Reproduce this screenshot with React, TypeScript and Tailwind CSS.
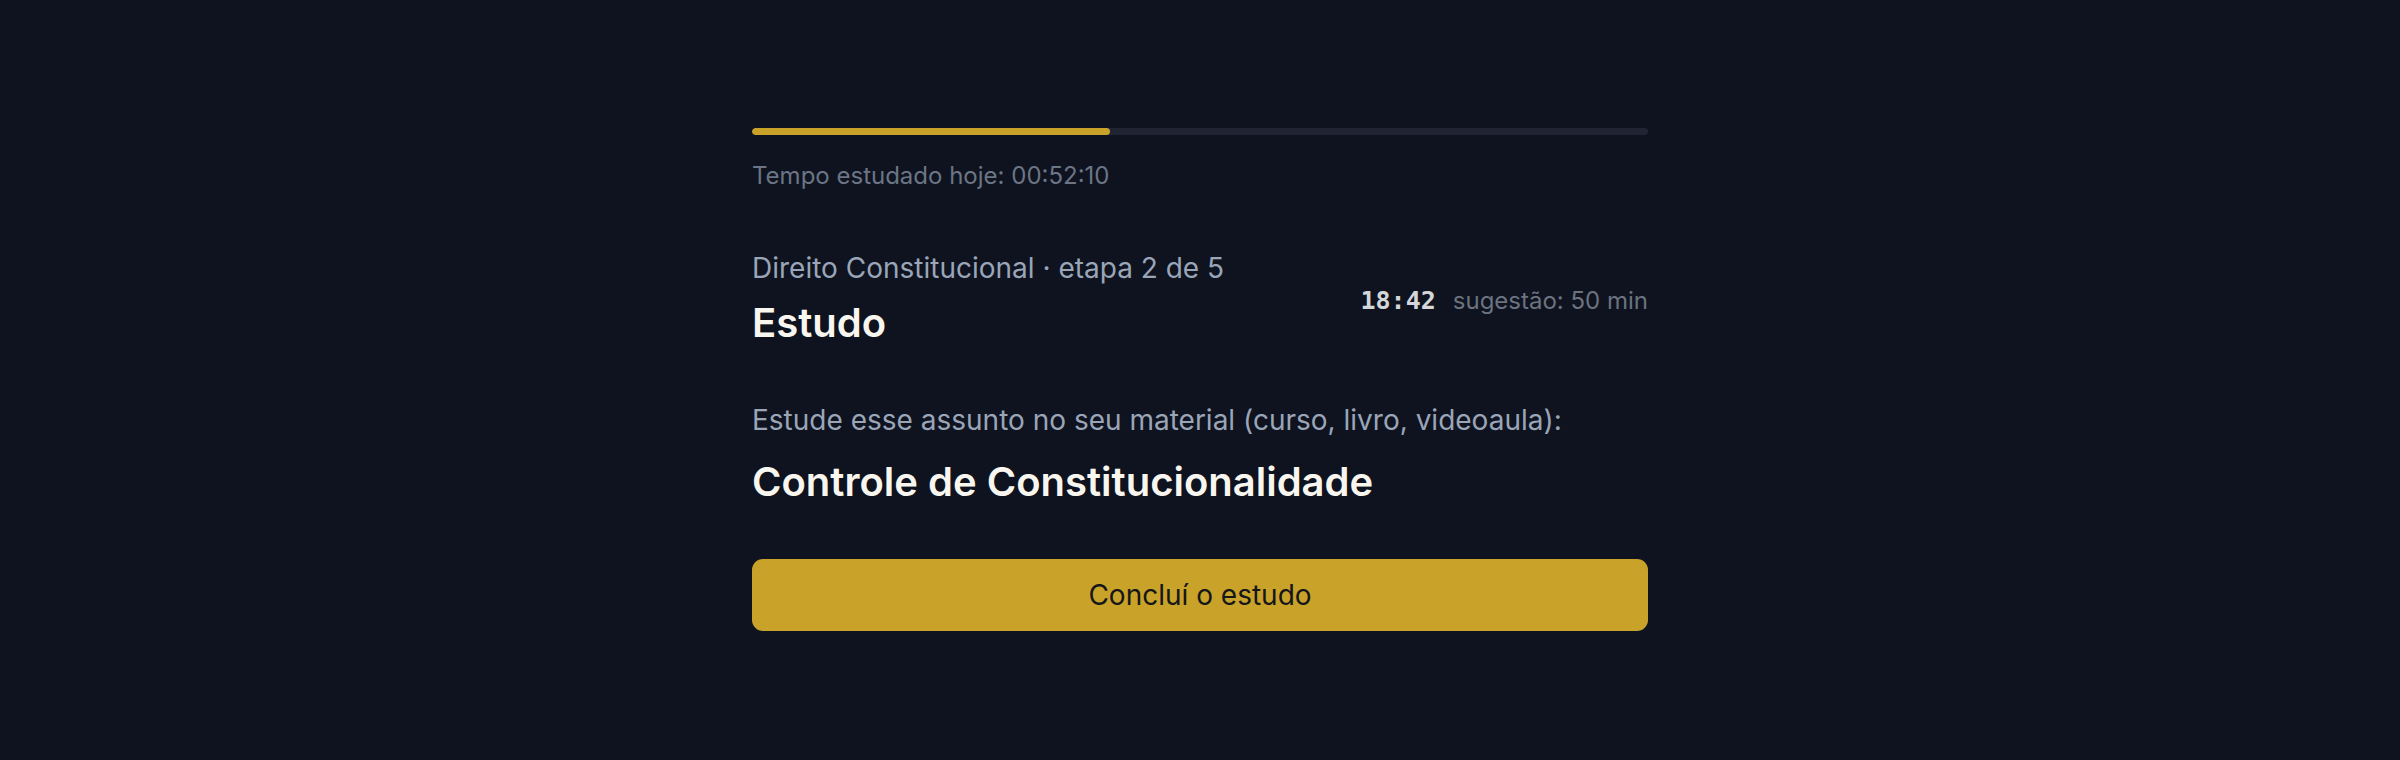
import React from "react";

interface StudyStepProps {
  subject: string;
  step: number;
  totalSteps: number;
  topic: string;
  elapsed: string;
  studiedToday: string;
  progress: number; // 0..1
}

const StudyStep: React.FC<StudyStepProps> = ({
  subject,
  step,
  totalSteps,
  topic,
  elapsed,
  studiedToday,
  progress,
}) => {
  return (
    <div className="w-[896px] pt-[128px]">
      {/* daily progress */}
      <div className="h-[7px] w-full rounded-full bg-[#1f2532] overflow-hidden">
        <div
          className="h-full rounded-full bg-[#c9a229]"
          style={{ width: `${progress * 100}%` }}
        />
      </div>
      <p className="mt-[23px] text-[24px] leading-[36px] text-[#6b7585]">
        Tempo estudado hoje: {studiedToday}
      </p>

      {/* step header */}
      <div className="mt-[54px] flex items-center justify-between">
        <div>
          <p className="text-[28px] leading-[40px] text-[#9aa5b8]">
            {subject} · etapa {step} de {totalSteps}
          </p>
          <h1 className="mt-[10px] text-[40px] leading-[50px] font-semibold text-[#f8f6ee]">
            Estudo
          </h1>
        </div>
        <div className="flex items-baseline gap-[17px] pt-[5px]">
          <span className="font-['DejaVu_Sans_Mono',monospace] text-[25px] font-semibold text-[#d4d6da]">
            {elapsed}
          </span>
          <span className="text-[24px] text-[#6b7280]">sugestão: 50 min</span>
        </div>
      </div>

      <p className="mt-[52px] text-[28px] leading-[40px] text-[#9aa5b8]">
        Estude esse assunto no seu material (curso, livro, videoaula):
      </p>
      <h2 className="mt-[18px] text-[40px] leading-[48px] font-semibold text-[#f8f6ee]">
        {topic}
      </h2>

      <button className="mt-[53px] h-[72px] w-full rounded-[11px] bg-[#c9a229] text-[28px] text-[#14161a]">
        Concluí o estudo
      </button>
    </div>
  );
};

export default function App() {
  return (
    <div
      className="min-h-screen bg-[#0e131f] flex justify-center"
      style={{ fontFamily: "Inter, 'Noto Sans', sans-serif" }}
    >
      <StudyStep
        subject="Direito Constitucional"
        step={2}
        totalSteps={5}
        topic="Controle de Constitucionalidade"
        elapsed="18:42"
        studiedToday="00:52:10"
        progress={0.4}
      />
    </div>
  );
}
